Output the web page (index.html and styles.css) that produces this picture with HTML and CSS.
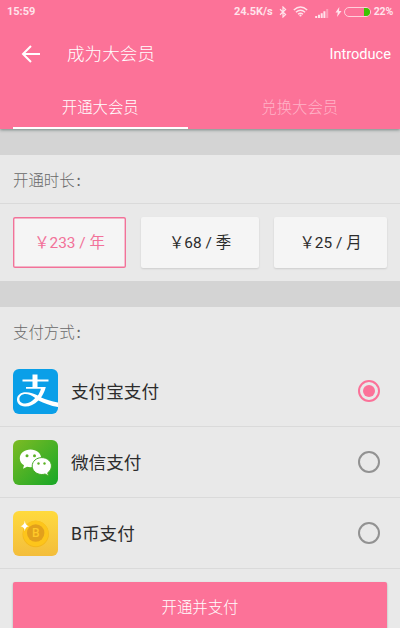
FILE: index.html
```html
<!DOCTYPE html>
<html lang="zh-CN">
<head>
<meta charset="utf-8">
<meta name="viewport" content="width=device-width, initial-scale=1">
<title>成为大会员</title>
<link rel="stylesheet" href="styles.css">
</head>
<body>
<header class="header">
  <div class="status">
    <span class="clock">15:59</span>
    <span class="speed">24.5K/s</span>
    <svg class="bluetooth" width="8" height="12" viewBox="0 0 8 12"><path d="M1 3.2 6.6 8.6 4 11V1l2.6 2.4L1 8.8"/></svg>
    <svg class="wifi" width="15" height="11" viewBox="0 0 15 11"><path d="M.8 4Q7.500-1.800 14.200 4M2.900 6.200Q7.500 2.300 12.100 6.200M5 8.300Q7.500 6.300 10 8.300"/><circle cx="7.500" cy="9.500" r="1.100"/></svg>
    <svg class="signal" width="14" height="9" viewBox="0 0 14 9"><path d="M.2 7h2v2h-2zM3 5.800h2V9H3zM5.700 4.200h2V9h-2zM8.400 2.300h2V9h-2z"/><path class="signal-off" d="M11.200 0h2v9h-2z"/></svg>
    <svg class="bolt" width="7" height="10" viewBox="0 0 7 10"><path d="M4.300 0 .5 5.600h2.300L2 10l4.500-6H4z"/></svg>
    <span class="battery"><span class="charge"></span></span>
    <span class="percent">22%</span>
  </div>
  <div class="toolbar">
    <svg class="back" width="20" height="20" viewBox="0 0 20 20"><path d="M19 10H2.500M10 2 2 10l8 8"/></svg>
    <h1 class="title">成为大会员</h1>
    <span class="intro">Introduce</span>
  </div>
  <nav class="tabs">
    <span class="tab tab-active">开通大会员</span>
    <span class="tab">兑换大会员</span>
  </nav>
</header>
<main>
  <section class="panel durations">
    <h2 class="heading heading-ruled">开通时长<span class="colon">:</span></h2>
    <div class="plans">
      <div class="plan plan-active">￥233 / 年</div>
      <div class="plan">￥68 / 季</div>
      <div class="plan">￥25 / 月</div>
    </div>
  </section>
  <section class="panel payments">
    <h2 class="heading">支付方式<span class="colon">:</span></h2>
    <div class="method">
      <svg class="logo" width="45" height="45" viewBox="0 0 45 45">
        <rect width="45" height="45" rx="6" fill="#0a9fe8"/>
        <path fill="#fff" d="M19.500 5.500h5v5h11v2h-11V18h8.300c-1 4.100-2.500 7.400-4.700 10.400 5 2 10 3.700 16.900 5.100V38c-7.600-1.300-13.900-3.800-19.600-6.600-4.500 4.200-8.800 6.200-13.600 6-4.900-.2-8-3.200-7.800-7.200.2-4.400 4-7.100 9-7 4.300.1 8 1.400 11.900 3.200 1.300-1.800 2.300-4 3-6.600H13v-1.800h6.500v-5.500h-10v-2h10zM12.500 25c-3.700 0-6.100 2.200-6.100 5 0 2.900 2.400 4.600 5.900 4.500 3.600-.1 6.800-2 9.900-5.500-3.600-2.400-6.600-4-9.700-4z"/>
      </svg>
      <span class="method-name">支付宝支付</span>
      <span class="radio radio-on"></span>
    </div>
    <div class="method">
      <svg class="logo" width="45" height="45" viewBox="0 0 45 45">
        <defs><linearGradient id="green" x1="0" y1="0" x2="1" y2="1"><stop offset="0" stop-color="#7dbb24"/><stop offset="1" stop-color="#17a727"/></linearGradient></defs>
        <rect width="45" height="45" rx="6" fill="url(#green)"/>
        <path fill="#fff" d="M17.500 9.600C11.500 9.600 6.800 13.500 6.800 18.400c0 2.900 1.600 5.300 4.200 6.900l-1 3.500 4-2.100c1.100.3 2.300.5 3.500.5 6 0 10.700-3.900 10.700-8.800S23.500 9.600 17.500 9.600z"/>
        <path fill="#fff" stroke="#45ad26" stroke-width="1" d="M28.800 17.600c-5.400 0-9.600 3.700-9.600 8.400s4.200 8.500 9.600 8.500c1.200 0 2.300-.2 3.300-.5l3.500 2-.9-3.200c2.300-1.600 3.700-4 3.700-6.800 0-4.700-4.200-8.400-9.600-8.400z"/>
        <g fill="#5cb226"><circle cx="14" cy="15.800" r="1.500"/><circle cx="21.500" cy="15.800" r="1.500"/><circle cx="25.500" cy="23.500" r="1.200"/><circle cx="31.500" cy="23.500" r="1.200"/></g>
      </svg>
      <span class="method-name">微信支付</span>
      <span class="radio"></span>
    </div>
    <div class="method">
      <svg class="logo" width="45" height="45" viewBox="0 0 45 45">
        <defs><linearGradient id="gold" x1="0" y1="0" x2="0" y2="1"><stop offset="0" stop-color="#ffda3e"/><stop offset="1" stop-color="#f3bd3c"/></linearGradient></defs>
        <rect width="45" height="45" rx="6" fill="url(#gold)"/>
        <circle cx="22.700" cy="23" r="13.200" fill="#f3b61b"/>
        <circle cx="22.700" cy="22.500" r="12.700" fill="#fdc51a"/>
        <circle cx="22.700" cy="22" r="8.700" fill="#e2a01c"/>
        <text class="coin-letter" x="22.800" y="26.300" text-anchor="middle">B</text>
        <path fill="#fff" d="M11.800 9.500q.4 4.900 4.200 5.700-3.800.7-4.200 5-.4-4.300-4.300-5 3.900-.8 4.300-5.700z"/>
      </svg>
      <span class="method-name">B币支付</span>
      <span class="radio"></span>
    </div>
    <button class="submit">开通并支付</button>
  </section>
</main>
</body>
</html>
```
FILE: styles.css
```css
* { box-sizing: border-box; }

body {
  margin: 0;
  height: 628px;
  overflow: hidden;
  background: #d4d4d4;
  color: #2c2c2c;
  font-family: Roboto, "Noto Sans CJK SC", sans-serif;
}

.header {
  position: relative;
  height: 129px;
  background: #fc7298;
  color: #fff;
  box-shadow: 0 1px 3px rgba(0, 40, 30, .45);
}

.status {
  display: flex;
  align-items: center;
  height: 23px;
  padding: 0 7px;
  color: #ffe3eb;
  font-size: 11px;
  font-weight: 700;
}

.speed { margin-left: auto; }
.status svg { fill: #ffe3eb; }
.status .bluetooth { margin-left: 6px; fill: none; stroke: #ffe3eb; stroke-width: 1.2; }
.wifi { margin-left: 6px; }
.wifi path { fill: none; stroke: #ffe3eb; stroke-width: 1.4; }
.signal { margin: 3px 0 0 7px; }
.signal-off { opacity: .4; }
.bolt { margin-left: 6px; }

.battery {
  display: flex;
  justify-content: flex-end;
  width: 27px;
  height: 10px;
  margin: 0 3px 0 2px;
  border: 1px solid #ffd0dc;
  border-radius: 5px;
  overflow: hidden;
}

.charge { width: 6px; background: #3cc400; }
.percent { font-size: 10.500px; letter-spacing: -.2px; }

.toolbar {
  display: flex;
  align-items: center;
  height: 62px;
  padding: 0 9px 0 21px;
}

.back { fill: none; stroke: #fff; stroke-width: 2; }
.title { margin: -3px 0 0 26px; font-size: 17.600px; font-weight: 300; }
.intro { margin-left: auto; font-size: 14.600px; }

.tabs { display: flex; height: 44px; padding: 0 13px; }

.tab {
  flex: 1;
  height: 44px;
  padding-left: 25px;
  border-bottom: 2px solid transparent;
  color: #ffb2c7;
  font-size: 15.400px;
  font-weight: 300;
  line-height: 47px;
  text-align: center;
}

.tab-active { padding: 0; color: #fff; border-color: #fff; }

.panel { background: #e9e9e9; }
.durations { height: 126px; margin-top: 26px; }
.payments { height: 321px; margin-top: 26px; }

.heading {
  height: 49px;
  margin: 0;
  padding-left: 13px;
  color: #686868;
  font-size: 15.400px;
  font-weight: 300;
  line-height: 49px;
}

.heading-ruled { border-bottom: 1px solid #dadada; }

.colon { margin-left: 2px; font-family: "Noto Sans CJK SC", sans-serif; font-weight: 400; }

.plans {
  display: grid;
  grid-template-columns: 113px 118px 113px;
  column-gap: 15px;
  padding: 13px 13px 0;
}

.plan {
  height: 51px;
  border-radius: 2px;
  background: #f5f5f5;
  box-shadow: 0 1px 2px rgba(0, 0, 0, .12);
  font-size: 15.400px;
  line-height: 52px;
  text-align: center;
}

.plan-active {
  box-shadow: inset 0 0 0 1.400px #f27299;
  color: #f27299;
}

.method {
  display: flex;
  align-items: center;
  height: 71px;
  padding: 0 20px 0 13px;
  border-bottom: 1px solid #dadada;
}

.logo { flex: none; }
.method-name { margin: -1px 0 0 13px; font-size: 17.600px; }
.coin-letter { fill: #ffc928; font: 500 12px Roboto, sans-serif; }

.radio {
  display: grid;
  place-items: center;
  width: 22px;
  height: 22px;
  margin-left: auto;
  border: 2px solid #929292;
  border-radius: 50%;
}

.radio-on { border-color: #fb7299; }
.radio-on::before { width: 12px; height: 12px; border-radius: 50%; background: #fb7299; content: ""; }

.submit {
  display: block;
  width: 374px;
  height: 51px;
  margin: 13px 13px 0;
  padding: 0 0 3px;
  border: 0;
  border-radius: 2px;
  background: #fc7298;
  box-shadow: 0 1px 2px rgba(0, 0, 0, .3);
  color: #fff;
  font: 300 15.400px Roboto, "Noto Sans CJK SC", sans-serif;
}
```
